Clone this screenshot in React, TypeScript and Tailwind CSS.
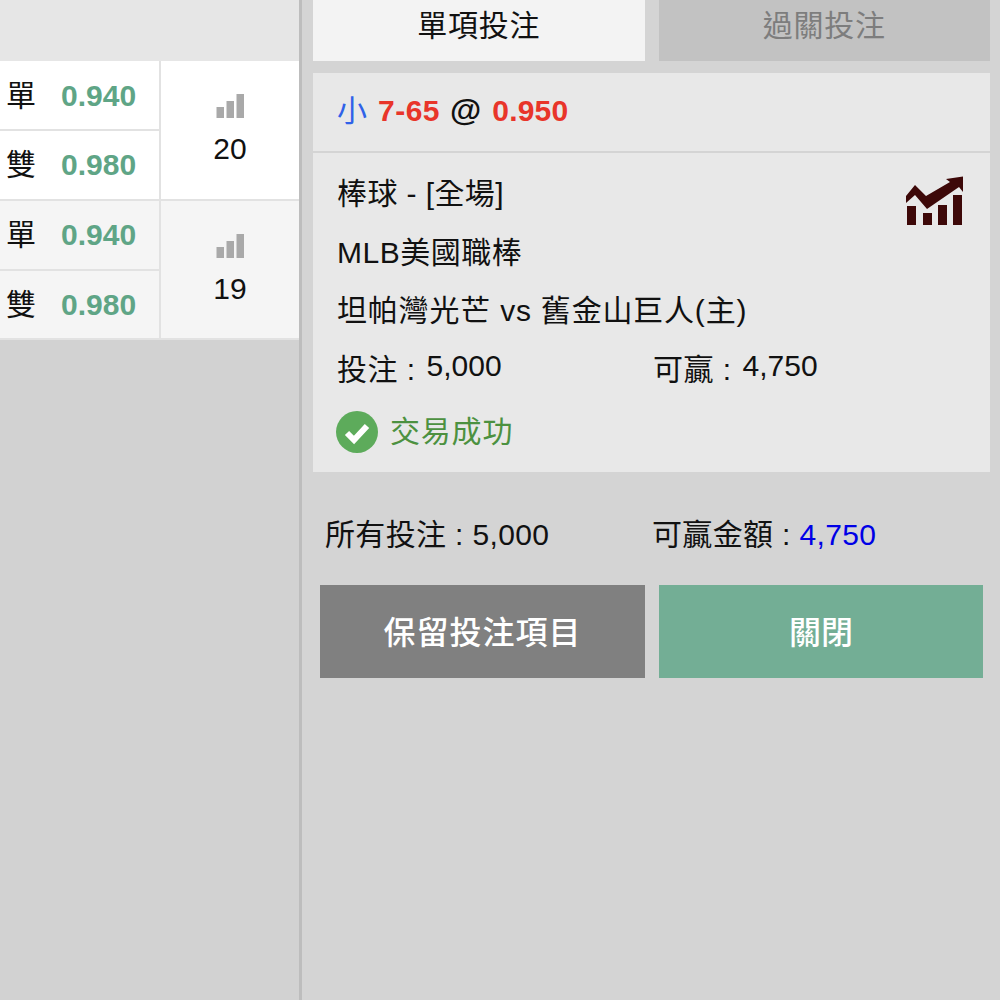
const font = "font-['Liberation_Sans','Noto_Sans_CJK_TC',sans-serif]"

function Bars() {
    return (
        <svg width="28" height="24" viewBox="0 0 28 24" className="block">
            <rect x="0.5" y="13" width="7.5" height="11" fill="#a9a9a9" />
            <rect x="10.5" y="7" width="7.5" height="17" fill="#a9a9a9" />
            <rect x="20.5" y="0" width="7.5" height="24" fill="#a9a9a9" />
        </svg>
    )
}

function TrendIcon() {
    return (
        <svg width="60" height="50" viewBox="0 0 60 50" className="block" fill="#3d0808">
            <rect x="2" y="30" width="9" height="19" />
            <rect x="18" y="37" width="9" height="12" />
            <rect x="33" y="29" width="9" height="20" />
            <rect x="48" y="19" width="9" height="30" />
            <path d="M1 20 L10 9 L21 20 L45 6 L41 3 L58 0.5 L58 16 L54 11 L22 33 L10 19 L1 27 Z" />
        </svg>
    )
}

function OddsGroup({ count, bg }: { count: string; bg: string }) {
    return (
        <div className={`flex h-[139.5px] ${bg} border-b-2 border-[#e2e2e2]`}>
            <div className="w-[159px] flex flex-col">
                <div className="h-[70px] border-b-2 border-[#e2e2e2] flex items-center pl-[6px]">
                    <span className="w-[55px]">單</span>
                    <span className="font-bold text-[#5fa586]">0.940</span>
                </div>
                <div className="flex-1 flex items-center pl-[6px]">
                    <span className="w-[55px]">雙</span>
                    <span className="font-bold text-[#5fa586]">0.980</span>
                </div>
            </div>
            <div className="flex-1 border-l-2 border-[#e2e2e2] flex flex-col items-center pt-[33px]">
                <Bars />
                <div className="leading-[34px] mt-[14px]">{count}</div>
            </div>
        </div>
    )
}

export default function App() {
    return (
        <div className={`flex w-[1000px] h-[1000px] bg-[#d4d4d4] text-[30px] text-[#111] overflow-hidden ${font}`}>
            <div className="w-[299px] shrink-0 bg-[#d2d2d2]">
                <div className="h-[61px] bg-[#e6e6e6]" />
                <OddsGroup count="20" bg="bg-white" />
                <OddsGroup count="19" bg="bg-[#f5f5f5]" />
            </div>
            <div className="w-[3px] shrink-0 bg-[#bdbdbd]" />
            <div className="flex-1 min-w-0">
                <div className="pl-[11px] pr-[10px]">
                    <div className="flex gap-[14px] tracking-[0.7px]">
                        <div className="flex-1 h-[61px] pb-[10px] bg-[#f3f3f3] flex items-center justify-center">單項投注</div>
                        <div className="flex-1 h-[61px] pb-[10px] bg-[#c2c2c2] text-[#7d7d7d] flex items-center justify-center">過關投注</div>
                    </div>
                    <div className="mt-[12px] h-[78px] pb-[4px] bg-[#e8e8e8] flex items-center pl-[24px]">
                        <span className="text-[#2f62e8]">小</span>
                        <span className="font-bold text-[#e8352a] ml-[11px] tracking-[0.5px]">7-65</span>
                        <span className="ml-[10px] font-bold text-[32px]">@</span>
                        <span className="font-bold text-[#e8352a] ml-[11px] tracking-[0.2px]">0.950</span>
                    </div>
                    <div className="relative mt-[2px] h-[319px] bg-[#e8e8e8] pl-[24px] pt-[12px]">
                        <div className="absolute left-[592px] top-[23px]">
                            <TrendIcon />
                        </div>
                        <div className="leading-[58.5px] h-[58.5px] tracking-[0.4px]">棒球 - [全場]</div>
                        <div className="leading-[58.5px] h-[58.5px] tracking-[0.5px]">MLB美國職棒</div>
                        <div className="leading-[58.5px] h-[58.5px] tracking-[0.8px]">坦帕灣光芒 vs 舊金山巨人(主)</div>
                        <div className="leading-[50px] h-[58.5px] flex tracking-[0.5px]">
                            <div className="w-[316px]">投注 : <span className="align-[4px] ml-[2px] tracking-normal">5,000</span></div>
                            <div>可贏 : <span className="align-[4px] ml-[2px] tracking-normal">4,750</span></div>
                        </div>
                        <div className="flex items-center mt-[10px] gap-[12px]">
                            <svg width="42" height="42" viewBox="0 0 42 42" className="block shrink-0 -ml-px">
                                <circle cx="21" cy="21" r="21" fill="#5dab5b" />
                                <path d="M11 22 L18 29 L31 15" fill="none" stroke="#fff" strokeWidth="6" />
                            </svg>
                            <span className="text-[#4c9140] tracking-[0.8px]">交易成功</span>
                        </div>
                    </div>
                </div>
                <div className="flex mt-[42px] pl-[23px] h-[40px] items-center tracking-[0.35px]">
                    <div className="w-[328px]">所有投注 : 5,000</div>
                    <div className="-ml-px">可贏金額 : <span className="text-[#0000e6]">4,750</span></div>
                </div>
                <div className="flex gap-[14px] mt-[31px] pl-[18px]">
                    <div className="w-[325px] h-[93px] pt-[2px] bg-[#808080] text-white text-[32px] font-medium tracking-[1px] flex items-center justify-center">保留投注項目</div>
                    <div className="w-[324px] h-[93px] pt-[2px] bg-[#73ae95] text-white text-[32px] font-medium flex items-center justify-center">關閉</div>
                </div>
            </div>
        </div>
    )
}
